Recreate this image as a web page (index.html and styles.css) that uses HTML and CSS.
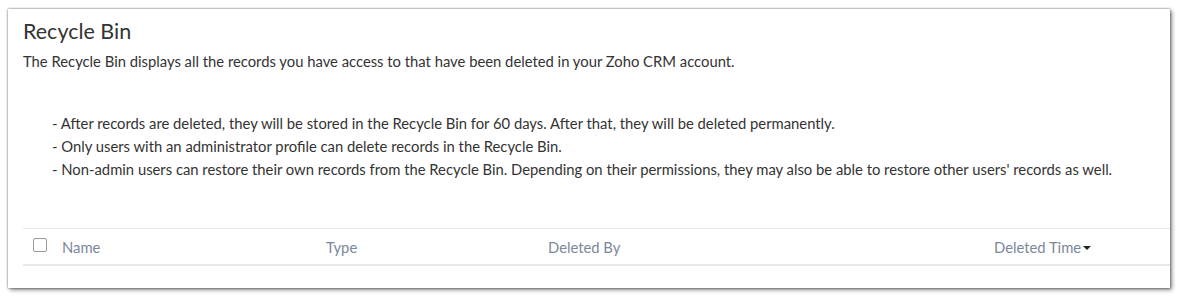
FILE: index.html
```html
<!DOCTYPE html>
<html lang="en">
<head>
    <meta charset="UTF-8">
    <title>Recycle Bin</title>
    <link rel="stylesheet" href="styles.css">
</head>
<body>

    <div class="card">
        <h1>Recycle Bin</h1>
        <p class="intro">The Recycle Bin displays all the records you have access to that have been deleted in your Zoho CRM account.</p>

        <ul class="notes">
            <li>- After records are deleted, they will be stored in the Recycle Bin for 60 days. After that, they will be deleted permanently.</li>
            <li>- Only users with an administrator profile can delete records in the Recycle Bin.</li>
            <li>- Non-admin users can restore their own records from the Recycle Bin. Depending on their permissions, they may also be able to restore other users' records as well.</li>
        </ul>

        <div class="table-head">
            <div class="col col-check"><span class="checkbox"></span></div>
            <div class="col col-name">Name</div>
            <div class="col col-type">Type</div>
            <div class="col col-by">Deleted By</div>
            <div class="col col-time">Deleted Time<span class="sort-arrow"></span></div>
        </div>
    </div>

</body>
</html>
```

FILE: styles.css
```css
body {
    font-family: Lato, "Open Sans", sans-serif;
    background-color: #ffffff;
    margin: 0;
    padding: 9px 9px 9px 8px;
    color: #333;
}
.card {
    background-color: #fff;
    height: 279px;
    box-sizing: border-box;
    padding: 0 0 0 15px;
    box-shadow: 0 0 2px rgba(0, 0, 0, 0.6), 2px 2px 4px rgba(0, 0, 0, 0.45);
}
.card h1 {
    margin: 0;
    padding-top: 9px;
    font-size: 21.5px;
    font-weight: normal;
    line-height: 27px;
    color: #333;
}
.intro {
    margin: 7px 0 0;
    font-size: 14.8px;
    line-height: 18px;
}
.notes {
    list-style: none;
    margin: 42px 0 0;
    padding: 0 0 0 29px;
    font-size: 14.8px;
    line-height: 23px;
}
.table-head {
    display: flex;
    align-items: center;
    margin-top: 47px;
    height: 35px;
    border-top: 1px solid #e8e8e8;
    border-bottom: 2px solid #e8e8e8;
    font-size: 14.8px;
    color: #7b879b;
}
.col-check {
    width: 39px;
    padding-left: 10px;
    box-sizing: border-box;
    display: flex;
}
.checkbox {
    width: 12px;
    height: 12px;
    border: 1px solid #9a9a9a;
    border-radius: 2px;
    margin-top: -3px;
}
.col-name {
    width: 264px;
}
.col-type {
    width: 222px;
}
.col-by {
    width: 446px;
}
.col-time {
    display: flex;
    align-items: center;
}
.sort-arrow {
    width: 0;
    height: 0;
    margin: 3px 0 0 2px;
    border-left: 4px solid transparent;
    border-right: 4px solid transparent;
    border-top: 4px solid #222;
}
```
